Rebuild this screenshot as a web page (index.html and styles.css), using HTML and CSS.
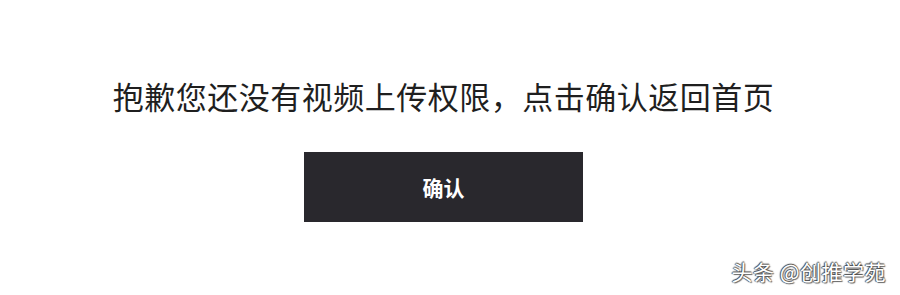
FILE: index.html
```html
<!DOCTYPE html>
<html lang="zh-CN">
<head>
<meta charset="utf-8">
<title>提示</title>
<link rel="stylesheet" href="styles.css">
</head>
<body>
<main class="page">
  <section class="notice">
    <h1 class="notice-title">抱歉您还没有视频上传权限，点击确认返回首页</h1>
    <button class="confirm-btn" type="button">确认</button>
  </section>
</main>
<div class="watermark">头条 @创推学苑</div>
</body>
</html>
```
FILE: styles.css
```css
html, body {
  margin: 0;
  padding: 0;
  background: #ffffff;
  width: 900px;
  height: 295px;
  overflow: hidden;
  font-family: "Noto Sans CJK SC", "Noto Sans", sans-serif;
}

.page {
  width: 887px;
  height: 295px;
  display: flex;
  justify-content: center;
}

.notice {
  display: flex;
  flex-direction: column;
  align-items: center;
  padding-top: 76px;
}

.notice-title {
  margin: 0;
  font-size: 31px;
  line-height: 40px;
  letter-spacing: 0.5px;
  font-weight: 400;
  color: #1f1f1f;
  white-space: nowrap;
}

.confirm-btn {
  margin-top: 36px;
  width: 279px;
  height: 70px;
  border: none;
  border-radius: 0;
  background: #29282d;
  color: #ffffff;
  font-family: "Noto Sans CJK SC", "Noto Sans", sans-serif;
  font-size: 21px;
  font-weight: 600;
  padding: 0;
  cursor: pointer;
}

.watermark {
  position: absolute;
  right: 14px;
  bottom: 13px;
  font-size: 21px;
  line-height: 22px;
  color: #ffffff;
  text-shadow: -1px 0 1px #444, 0 -1px 1px #444, 1px 1px 1px #666;
  letter-spacing: 0.5px;
  white-space: nowrap;
}
```
